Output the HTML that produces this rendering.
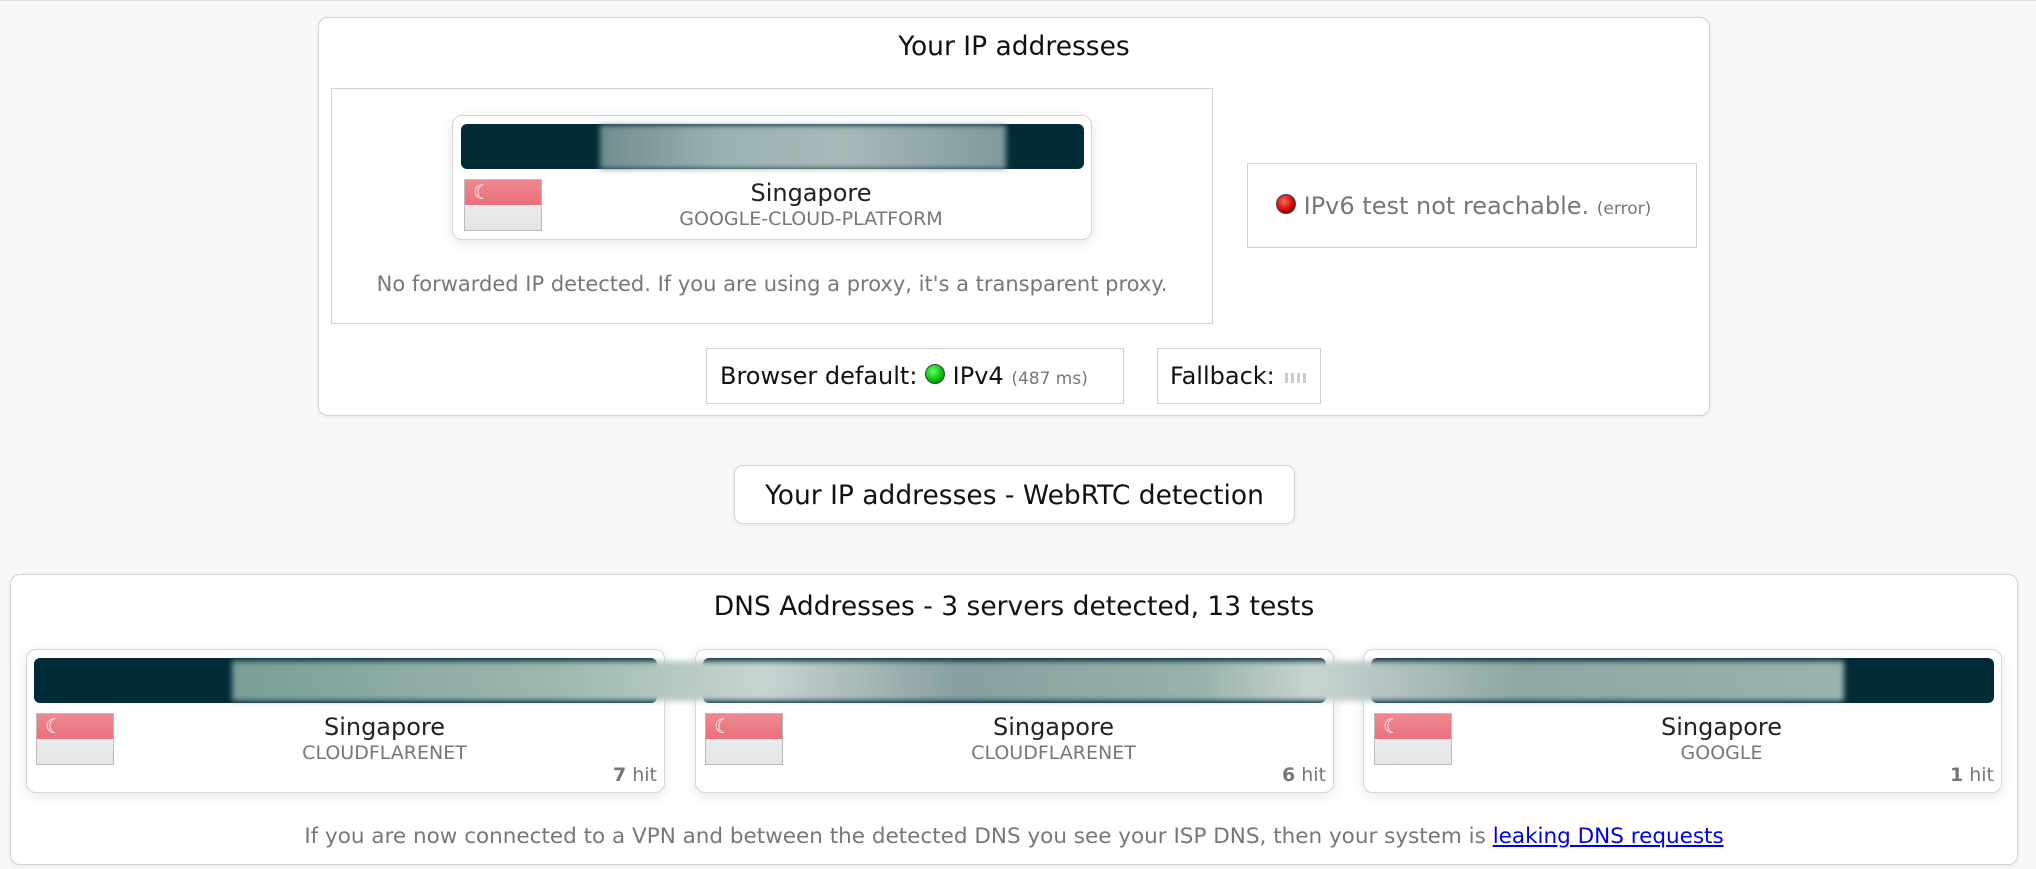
<!DOCTYPE html>
<html><head><meta charset="utf-8"><style>
*{box-sizing:border-box;margin:0;padding:0}
body{width:2036px;height:869px;background:#f8f8f8;font-family:"DejaVu Sans","Liberation Sans",sans-serif;position:relative;overflow:hidden;border-top:1px solid #e2e2e2}
.a{position:absolute}
.card{background:#fff;border:1px solid #d4d4d4;border-radius:10px;box-shadow:0 1px 4px rgba(0,0,0,.08)}
.box{background:#fff;border:1px solid #d0d0d0}
.ipc{background:#fff;border:1px solid #d6d6d6;border-radius:10px;box-shadow:0 3px 12px rgba(0,0,0,.1)}
.bar{background:#022b38;border-radius:6px}
.blur{background:linear-gradient(90deg,#6f8d8f,#9bb2b2 30%,#a8b9ba 60%,#80999b);filter:blur(3px)}
.flag{width:78px;height:52px;border:1px solid #bbb;background:linear-gradient(#f08890,#e8707c 50%,#ececec 50%,#e4e4e4)}
.flag:before{content:"☾";position:absolute;left:8px;top:0;color:#fff;font-size:20px}
.t{color:#111;font-size:26.5px}
.g{color:#777}
.dot{display:inline-block;width:20px;height:20px;border-radius:50%;vertical-align:0px;border:1px solid #444}
</style></head><body>
<div class="a card" style="left:318px;top:16px;width:1392px;height:399px"></div>
<div class="a t" style="left:318px;width:1392px;text-align:center;top:30px">Your IP addresses</div>
<div class="a box" style="left:331px;top:87px;width:882px;height:236px"></div>
<div class="a ipc" style="left:452px;top:114px;width:640px;height:125px"></div>
<div class="a bar" style="left:461px;top:123px;width:623px;height:45px"></div>
<div class="a blur" style="left:600px;top:124px;width:406px;height:44px"></div>
<div class="a flag" style="left:464px;top:178px"></div>
<div class="a" style="left:530px;width:562px;text-align:center;top:178px;font-size:24px;color:#222">Singapore</div>
<div class="a g" style="left:530px;width:562px;text-align:center;top:207px;font-size:19px">GOOGLE-CLOUD-PLATFORM</div>
<div class="a g" style="left:331px;width:882px;text-align:center;top:271px;font-size:21px;white-space:nowrap">No forwarded IP detected. If you are using a proxy, it's a transparent proxy.</div>
<div class="a box" style="left:1247px;top:162px;width:450px;height:85px"></div>
<div class="a g" style="left:1276px;top:191px;font-size:24px;white-space:nowrap"><span class="dot" style="background:radial-gradient(circle at 40% 35%,#ff6a5a,#c00 60%,#600)"></span> IPv6 test not reachable. <span style="font-size:17px">(error)</span></div>
<div class="a box" style="left:706px;top:347px;width:418px;height:56px"></div>
<div class="a" style="left:720px;top:361px;font-size:24px;color:#111;white-space:nowrap">Browser default: <span class="dot" style="background:radial-gradient(circle at 40% 35%,#6f6,#0b0 60%,#050)"></span> IPv4 <span class="g" style="font-size:17px">(487 ms)</span></div>
<div class="a box" style="left:1157px;top:347px;width:164px;height:56px"></div>
<div class="a" style="left:1170px;top:361px;font-size:24px;color:#111">Fallback:</div>
<div class="a" style="left:1285px;top:372px;width:24px;height:10px;background:repeating-linear-gradient(90deg,#ccc 0 3px,#fff 3px 6px)"></div>
<div class="a card" style="left:734px;top:464px;width:561px;height:59px;border-radius:9px"></div>
<div class="a t" style="left:734px;width:561px;text-align:center;top:479px;white-space:nowrap">Your IP addresses - WebRTC detection</div>
<div class="a card" style="left:10px;top:573px;width:2008px;height:291px"></div>
<div class="a t" style="left:10px;width:2008px;text-align:center;top:590px">DNS Addresses - 3 servers detected, 13 tests</div>

<div class="a ipc" style="left:26px;top:648px;width:639px;height:144px"></div>
<div class="a ipc" style="left:695px;top:648px;width:639px;height:144px"></div>
<div class="a ipc" style="left:1363px;top:648px;width:639px;height:144px"></div>
<div class="a bar" style="left:34px;top:657px;width:623px;height:45px"></div>
<div class="a bar" style="left:703px;top:657px;width:623px;height:45px"></div>
<div class="a bar" style="left:1371px;top:657px;width:623px;height:45px"></div>
<div class="a blur" style="left:232px;top:660px;width:1612px;height:40px;background:linear-gradient(90deg,#7a9e98,#9cb8b0 20%,#c8d4d2 33%,#889ea0 45%,#98b2ac 60%,#c8d4d2 67%,#8ea6a4 80%,#9bb4b0)"></div>
<div class="a flag" style="left:36px;top:712px"></div>
<div class="a flag" style="left:705px;top:712px"></div>
<div class="a flag" style="left:1374px;top:712px"></div>
<div class="a" style="left:104px;width:561px;text-align:center;top:712px;font-size:24px;color:#222">Singapore</div>
<div class="a" style="left:773px;width:561px;text-align:center;top:712px;font-size:24px;color:#222">Singapore</div>
<div class="a" style="left:1441px;width:561px;text-align:center;top:712px;font-size:24px;color:#222">Singapore</div>
<div class="a g" style="left:104px;width:561px;text-align:center;top:741px;font-size:19px">CLOUDFLARENET</div>
<div class="a g" style="left:773px;width:561px;text-align:center;top:741px;font-size:19px">CLOUDFLARENET</div>
<div class="a g" style="left:1441px;width:561px;text-align:center;top:741px;font-size:19px">GOOGLE</div>
<div class="a g" style="left:26px;width:631px;text-align:right;top:763px;font-size:19px"><b>7</b> hit</div>
<div class="a g" style="left:695px;width:631px;text-align:right;top:763px;font-size:19px"><b>6</b> hit</div>
<div class="a g" style="left:1363px;width:631px;text-align:right;top:763px;font-size:19px"><b>1</b> hit</div>
<div class="a g" style="left:10px;width:2008px;text-align:center;top:823px;font-size:21.5px;white-space:nowrap">If you are now connected to a VPN and between the detected DNS you see your ISP DNS, then your system is <span style="color:#00e;text-decoration:underline">leaking DNS requests</span></div>
</body></html>
